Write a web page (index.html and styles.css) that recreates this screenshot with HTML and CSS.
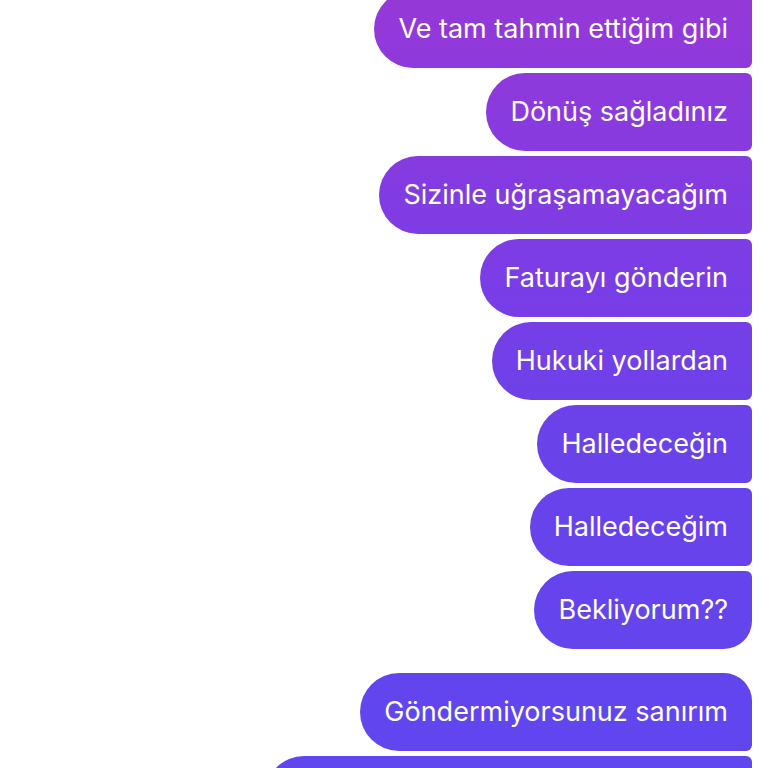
FILE: index.html
```html
<!DOCTYPE html>
<html lang="tr">
<head>
<meta charset="utf-8">
<title>Mesajlar</title>
<link rel="stylesheet" href="styles.css">
</head>
<body>
<main class="thread">
  <section class="group">
    <div class="msg">Ve tam tahmin ettiğim gibi</div>
    <div class="msg">Dönüş sağladınız</div>
    <div class="msg">Sizinle uğraşamayacağım</div>
    <div class="msg">Faturayı gönderin</div>
    <div class="msg">Hukuki yollardan</div>
    <div class="msg">Halledeceğin</div>
    <div class="msg">Halledeceğim</div>
    <div class="msg last">Bekliyorum??</div>
  </section>
  <section class="group">
    <div class="msg first">Göndermiyorsunuz sanırım</div>
    <div class="msg wide"></div>
  </section>
</main>
</body>
</html>
```

FILE: styles.css
```css
html, body {
  margin: 0;
  padding: 0;
  background: #ffffff;
  overflow: hidden;
}

.thread {
  display: flex;
  flex-direction: column;
  gap: 24px;
  margin-top: -10px;
  padding-right: 16px;
  font-family: Inter, "Noto Sans", sans-serif;
}

.group {
  display: flex;
  flex-direction: column;
  align-items: flex-end;
  gap: 5px;
}

.msg {
  box-sizing: border-box;
  height: 78px;
  line-height: 78px;
  padding: 0 24px;
  color: #ffffff;
  font-size: 27px;
  font-weight: 400;
  letter-spacing: 0;
  white-space: nowrap;
  border-radius: 39px 6px 6px 39px;
  background: linear-gradient(180deg, #9538d8 0px, #7a3de6 280px, #6a42ea 440px, #6245ee 700px, #6046ef 768px);
  background-attachment: fixed;
}

.msg.last {
  border-radius: 39px 6px 28px 39px;
}

.msg.first {
  border-radius: 39px 28px 6px 39px;
}

.msg.wide {
  width: 487px;
}
```
